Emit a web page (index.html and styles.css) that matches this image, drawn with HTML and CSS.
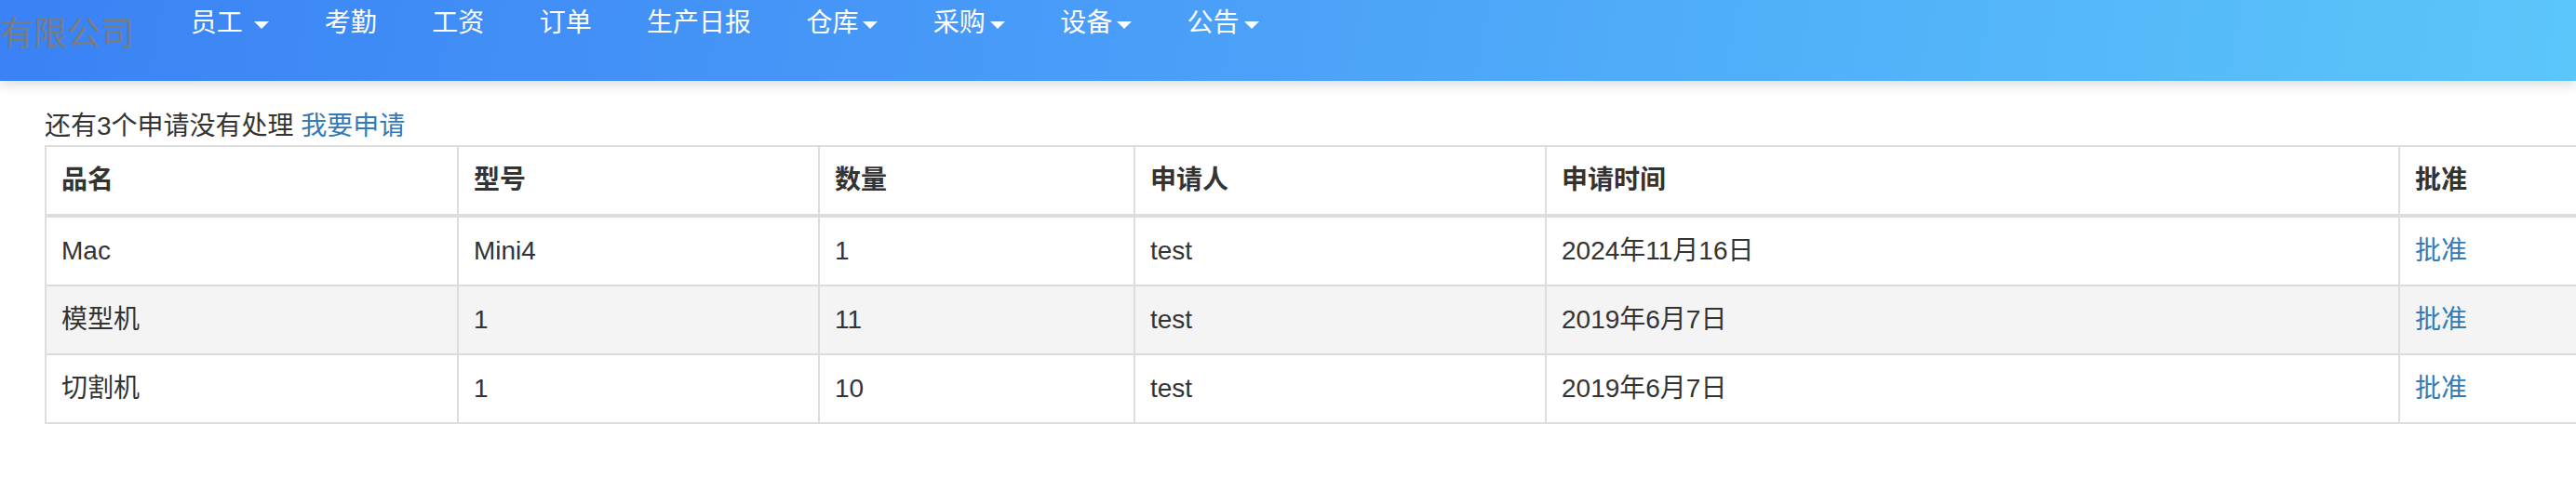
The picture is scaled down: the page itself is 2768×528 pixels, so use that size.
FILE: index.html
```html
<!DOCTYPE html>
<html lang="zh-CN">
<head>
<meta charset="utf-8">
<title>申请列表</title>
<link rel="stylesheet" href="styles.css">
</head>
<body>
<header class="topbar">
  <div class="brand">有限公司</div>
  <nav class="nav">
    <a class="nav-link" href="#">员工 <span class="caret"></span></a>
    <a class="nav-link" href="#">考勤</a>
    <a class="nav-link" href="#">工资</a>
    <a class="nav-link" href="#">订单</a>
    <a class="nav-link" href="#">生产日报</a>
    <a class="nav-link" href="#">仓库<span class="caret"></span></a>
    <a class="nav-link" href="#">采购<span class="caret"></span></a>
    <a class="nav-link" href="#">设备<span class="caret"></span></a>
    <a class="nav-link" href="#">公告<span class="caret"></span></a>
  </nav>
</header>
<main class="content">
  <div class="notice">还有3个申请没有处理 <a class="link" href="#">我要申请</a></div>
  <table class="grid">
    <thead>
      <tr>
        <th class="c1">品名</th>
        <th class="c2">型号</th>
        <th class="c3">数量</th>
        <th class="c4">申请人</th>
        <th class="c5">申请时间</th>
        <th class="c6">批准</th>
      </tr>
    </thead>
    <tbody>
      <tr>
        <td>Mac</td><td>Mini4</td><td>1</td><td>test</td><td>2024年11月16日</td><td><a class="link" href="#">批准</a></td>
      </tr>
      <tr class="alt">
        <td>模型机</td><td>1</td><td>11</td><td>test</td><td>2019年6月7日</td><td><a class="link" href="#">批准</a></td>
      </tr>
      <tr>
        <td>切割机</td><td>1</td><td>10</td><td>test</td><td>2019年6月7日</td><td><a class="link" href="#">批准</a></td>
      </tr>
    </tbody>
  </table>
</main>
</body>
</html>
```
FILE: styles.css
```css
html, body {
  margin: 0;
  padding: 0;
  background: #ffffff;
  overflow: hidden;
}
body {
  font-family: "Liberation Sans", "Noto Sans CJK SC", sans-serif;
  font-size: 28px;
  line-height: 40px;
  color: #333333;
}
.topbar {
  height: 87px;
  display: flex;
  align-items: flex-start;
  background: linear-gradient(100deg, #3a82f5 0%, #4a9ef8 45%, #5bc6fa 100%);
  box-shadow: 0 5px 12px rgba(0, 0, 0, 0.13);
  position: relative;
  z-index: 1;
}
.brand {
  width: 175px;
  margin-top: 8px;
  padding-left: 0;
  font-family: "Noto Sans CJK SC", sans-serif;
  font-size: 36px;
  line-height: 50px;
  color: #7c7c7c;
  white-space: nowrap;
}
.nav {
  display: flex;
}
.nav-link {
  display: block;
  padding: 5px 29.7px 0;
  line-height: 40px;
  font-family: "Liberation Sans", "Noto Sans CJK SC", sans-serif;
  font-size: 28px;
  color: #ffffff;
  text-decoration: none;
  white-space: nowrap;
}
.caret {
  display: inline-block;
  width: 0;
  height: 0;
  margin-left: 5px;
  vertical-align: middle;
  border-top: 8px solid #ffffff;
  border-left: 8px solid transparent;
  border-right: 8px solid transparent;
}
.content {
  padding: 29px 0 0 48px;
  overflow: hidden;
}
.notice {
  line-height: 40px;
  white-space: nowrap;
}
.link {
  color: #337ab7;
  text-decoration: none;
}
.grid {
  table-layout: fixed;
  width: 2831px;
  border-collapse: separate;
  border-spacing: 0;
  border-top: 2px solid #dddddd;
  border-left: 2px solid #dddddd;
}
.grid th,
.grid td {
  box-sizing: border-box;
  padding: 16px;
  line-height: 40px;
  text-align: left;
  vertical-align: top;
  border-right: 2px solid #dddddd;
  border-bottom: 2px solid #dddddd;
  white-space: nowrap;
}
.grid th {
  font-weight: bold;
  border-bottom-width: 4px;
}
.grid .c1 { width: 443px; }
.grid .c2 { width: 388px; }
.grid .c3 { width: 339px; }
.grid .c4 { width: 442px; }
.grid .c5 { width: 917px; }
.grid .c6 { width: 300px; }
.grid tr.alt td {
  background: #f4f4f4;
}
```
